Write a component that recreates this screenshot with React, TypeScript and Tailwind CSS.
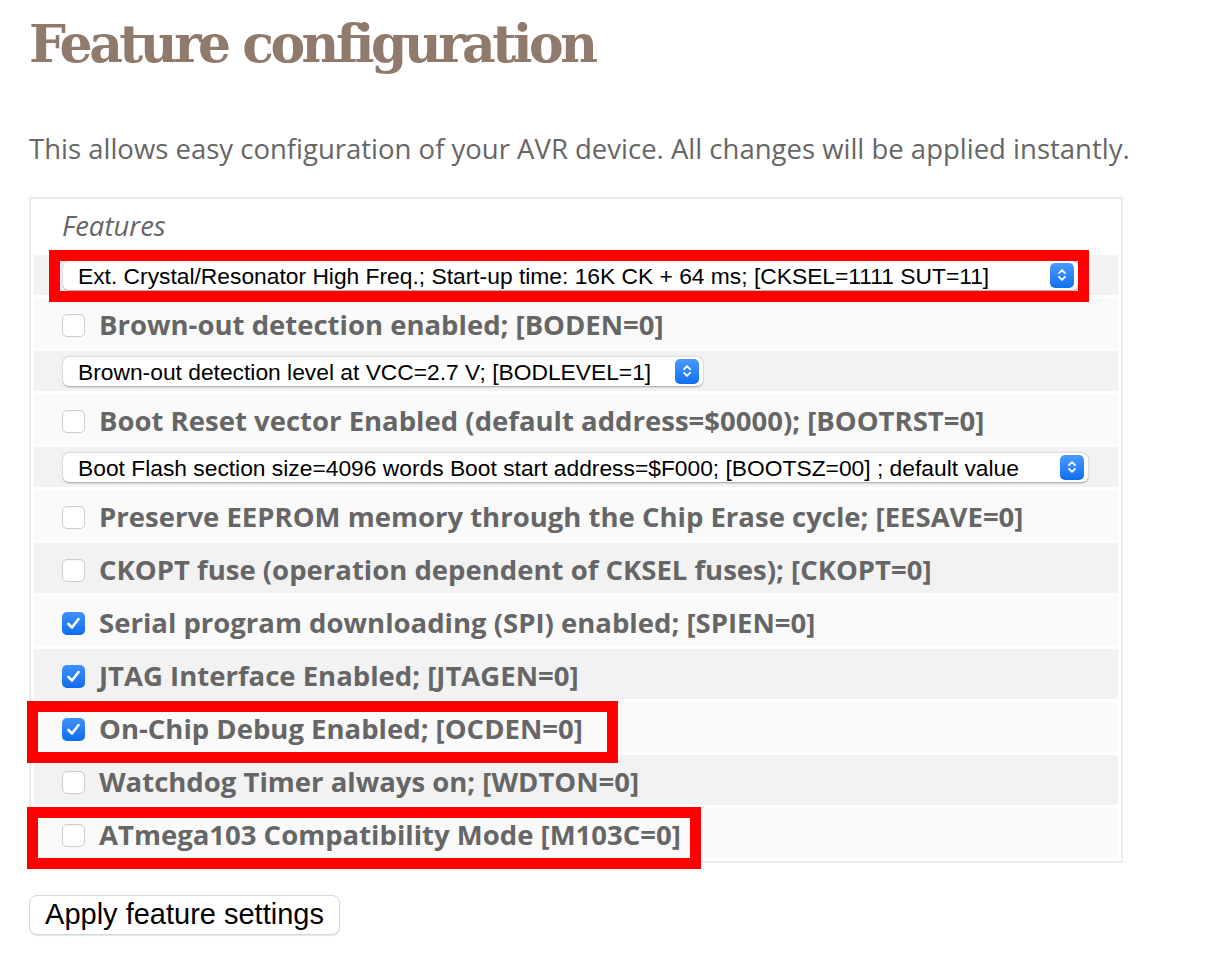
import React from "react";

const labelFont = { fontFamily: '"Open Sans", sans-serif' };

function Chevrons() {
  return (
    <svg width="10" height="14" viewBox="0 0 10 14" fill="none" stroke="white" strokeWidth="1.8" strokeLinecap="round" strokeLinejoin="round">
      <path d="M2 5.2 L5 2.2 L8 5.2" />
      <path d="M2 8.8 L5 11.8 L8 8.8" />
    </svg>
  );
}

function Select({ text, width }: { text: string; width: string }) {
  return (
    <div className={`relative flex h-[29px] items-center rounded-[6px] bg-white pl-[15px] shadow-[0_0.5px_2px_rgba(0,0,0,0.35)] ${width}`}>
      <span className="whitespace-nowrap pt-[2px] text-[22.8px] leading-none text-black [font-family:'Liberation_Sans',Arial,sans-serif]">{text}</span>
      <div className="absolute right-[4px] top-[2px] flex h-[25px] w-[24px] items-center justify-center rounded-[5px] bg-gradient-to-b from-[#4a9bff] to-[#0a6ff0]">
        <Chevrons />
      </div>
    </div>
  );
}

function Checkbox({ checked }: { checked: boolean }) {
  if (checked) {
    return (
      <div className="flex h-[23px] w-[23px] shrink-0 items-center justify-center rounded-[5px] bg-gradient-to-b from-[#3f91fb] to-[#0b6cec]">
        <svg width="15" height="13" viewBox="0 0 15 13" fill="none" stroke="white" strokeWidth="2.6" strokeLinecap="round" strokeLinejoin="round">
          <path d="M2.5 7 L6 10.5 L12.5 2" />
        </svg>
      </div>
    );
  }
  return <div className="h-[23px] w-[23px] shrink-0 rounded-[5px] border border-[#cdcdcd] bg-white shadow-[inset_0_1px_1px_rgba(0,0,0,0.04)]" />;
}

type Row =
  | { kind: "select"; text: string; width: string }
  | { kind: "check"; text: string; checked: boolean };

const rows: Row[] = [
  { kind: "select", text: "Ext. Crystal/Resonator High Freq.; Start-up time: 16K CK + 64 ms; [CKSEL=1111 SUT=11]", width: "w-[1015px]" },
  { kind: "check", text: "Brown-out detection enabled; [BODEN=0]", checked: false },
  { kind: "select", text: "Brown-out detection level at VCC=2.7 V; [BODLEVEL=1]", width: "w-[640px]" },
  { kind: "check", text: "Boot Reset vector Enabled (default address=$0000); [BOOTRST=0]", checked: false },
  { kind: "select", text: "Boot Flash section size=4096 words Boot start address=$F000; [BOOTSZ=00] ; default value", width: "w-[1025px]" },
  { kind: "check", text: "Preserve EEPROM memory through the Chip Erase cycle; [EESAVE=0]", checked: false },
  { kind: "check", text: "CKOPT fuse (operation dependent of CKSEL fuses); [CKOPT=0]", checked: false },
  { kind: "check", text: "Serial program downloading (SPI) enabled; [SPIEN=0]", checked: true },
  { kind: "check", text: "JTAG Interface Enabled; [JTAGEN=0]", checked: true },
  { kind: "check", text: "On-Chip Debug Enabled; [OCDEN=0]", checked: true },
  { kind: "check", text: "Watchdog Timer always on; [WDTON=0]", checked: false },
  { kind: "check", text: "ATmega103 Compatibility Mode [M103C=0]", checked: false },
];

export default function App() {
  return (
    <div className="relative min-h-[968px] w-[1226px] bg-white pl-[29px] pt-[8px]">
      <h1 className="text-[52px] font-bold leading-[72px] tracking-[-3.5px] text-[#8f7a6c] [font-family:'DejaVu_Serif',serif]">
        Feature configuration
      </h1>
      <p className="mt-[52px] whitespace-nowrap text-[27.5px] leading-[34px] text-[#666666]" style={labelFont}>
        This allows easy configuration of your AVR device. All changes will be applied instantly.
      </p>
      <div className="mt-[31px] w-[1094px] border-2 border-[#ebebeb] p-[3px]">
        <div className="flex flex-col gap-[3px]">
          <div className="flex h-[50px] items-center pl-[28px] pb-[2px]">
            <span className="text-[27.5px] italic leading-none text-[#666666]" style={labelFont}>Features</span>
          </div>
          {rows.map((r, i) => {
            const bg = i % 2 === 0 ? "bg-[#f2f2f2]" : "bg-[#fafafa]";
            if (r.kind === "select") {
              return (
                <div key={i} className={`flex h-[40px] items-center pl-[29px] ${bg}`}>
                  <Select text={r.text} width={r.width} />
                </div>
              );
            }
            return (
              <div key={i} className={`flex h-[50px] items-center pl-[28px] pt-[4px] ${bg}`}>
                <Checkbox checked={r.checked} />
                <span
                  className="ml-[14px] whitespace-nowrap text-[27.5px] font-bold leading-none text-[#666666]"
                  style={labelFont}
                >
                  {r.text}
                </span>
              </div>
            );
          })}
        </div>
      </div>
      <button className="mt-[32px] flex h-[40px] w-[311px] items-center justify-center rounded-[8px] border border-[#d6d6d6] bg-white text-[29px] text-black shadow-[0_1px_1px_rgba(0,0,0,0.1)] [font-family:'Liberation_Sans',Arial,sans-serif]">
        Apply feature settings
      </button>

      {/* red annotation boxes */}
      <div className="pointer-events-none absolute left-[49px] top-[250px] h-[52px] w-[1040px] border-[11px] border-[#ff0000]" />
      <div className="pointer-events-none absolute left-[27px] top-[701px] h-[62px] w-[591px] border-[11px] border-[#ff0000]" />
      <div className="pointer-events-none absolute left-[27px] top-[807px] h-[62px] w-[674px] border-[11px] border-[#ff0000]" />
    </div>
  );
}
